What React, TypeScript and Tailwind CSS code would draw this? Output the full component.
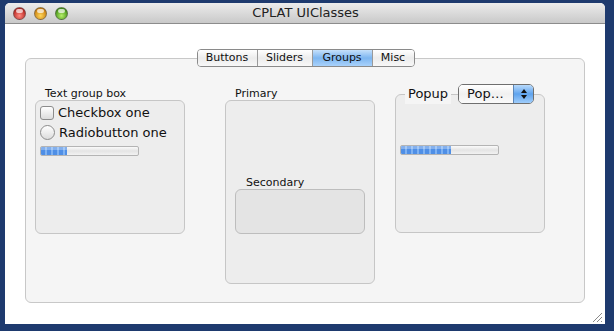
import React from "react";

const font = { fontFamily: '"DejaVu Sans", "Lucida Grande", sans-serif' };

function Light({ from, to }: { from: string; to: string }) {
  return (
    <div
      className="w-[13px] h-[13px] rounded-full border border-[#5a5a5a]/60 flex items-start justify-center"
      style={{ background: `radial-gradient(circle at 50% 70%, ${to} 0%, ${from} 75%)` }}
    >
      <div className="mt-[1px] w-[7px] h-[4px] rounded-full bg-white/70" />
    </div>
  );
}

function Progress({ fill }: { fill: number }) {
  return (
    <div className="w-[99px] h-[10px] rounded-[2px] border border-[#b4b4b4] bg-gradient-to-b from-[#fafafa] via-[#e4e4e4] to-[#f2f2f2] overflow-hidden flex">
      <div
        className="h-full bg-[repeating-linear-gradient(90deg,#4f8fe6_0px,#4f8fe6_4px,#7fb2f2_4px,#7fb2f2_6px)]"
        style={{ width: fill }}
      >
        <div className="h-[3px] bg-white/30" />
      </div>
    </div>
  );
}

function Box({ className = "", children }: { className?: string; children?: React.ReactNode }) {
  return (
    <div className={"w-[150px] rounded-[6px] border border-[#c6c6c6] bg-[#ededed] " + className}>
      {children}
    </div>
  );
}

const tabs = ["Buttons", "Sliders", "Groups", "Misc"];
const tabW = ["w-[59px]", "w-[55px]", "w-[60px]", "w-[42px]"];

export default function App() {
  return (
    <div className="w-[614px] h-[331px] bg-[#1e3a6e] pt-[3px] pl-[5px]" style={font}>
      <div className="w-[600px] h-[321px] flex flex-col bg-white rounded-t-[5px] overflow-hidden">
        {/* Title bar */}
        <div className="h-[21px] flex items-center bg-gradient-to-b from-[#ececec] to-[#c9c9c9] border-b border-[#8c8c8c] pl-[8px]">
          <div className="flex gap-[8px]">
            <Light from="#b3201c" to="#ff8a80" />
            <Light from="#c77b0a" to="#ffd75a" />
            <Light from="#3f8e12" to="#b6f06a" />
          </div>
          <div className="flex-1 text-center text-[13px] text-[#222] pr-[62px]">CPLAT UIClasses</div>
        </div>

        {/* Content */}
        <div className="flex-1 flex flex-col px-[20px] pt-[25px] relative">
          <div className="flex justify-center relative z-10 pl-[1px]">
            <div className="flex h-[18px] rounded-[4px] border border-[#8a8a8a] overflow-hidden text-[11px] text-[#111]">
              {tabs.map((t, i) => (
                <div
                  key={t}
                  className={
                    tabW[i] +
                    " flex items-center justify-center " +
                    (i > 0 ? "border-l border-[#9a9a9a] " : "") +
                    (t === "Groups"
                      ? "bg-gradient-to-b from-[#c6e1fb] via-[#7db6f0] to-[#a9d2fb]"
                      : "bg-gradient-to-b from-[#ffffff] via-[#ececec] to-[#f8f8f8]")
                  }
                >
                  {t}
                </div>
              ))}
            </div>
          </div>

          <div className="-mt-[9px] w-[560px] h-[245px] rounded-[6px] border border-[#c8c8c8] bg-[#f5f5f5] flex items-start pl-[9px] pt-[28px]">
            {/* Text group box */}
            <div className="flex flex-col">
              <div className="text-[11px] text-[#111] pl-[10px] h-[13px] leading-[13px]">Text group box</div>
              <Box className="h-[134px] pl-[4px] pt-[3px] text-[13px] text-[#111]">
                <div className="flex items-center gap-[4px] h-[17px]">
                  <div className="w-[14px] h-[14px] rounded-[3px] border border-[#8c8c8c] bg-gradient-to-b from-white to-[#dcdcdc]" />
                  <span>Checkbox one</span>
                </div>
                <div className="flex items-center gap-[4px] h-[17px] mt-[3px]">
                  <div className="w-[15px] h-[15px] rounded-full border border-[#8c8c8c] bg-gradient-to-b from-white to-[#dcdcdc]" />
                  <span>Radiobutton one</span>
                </div>
                <div className="mt-[5px]">
                  <Progress fill={26} />
                </div>
              </Box>
            </div>

            {/* Primary */}
            <div className="flex flex-col ml-[40px]">
              <div className="text-[11px] text-[#111] pl-[10px] h-[13px] leading-[13px]">Primary</div>
              <Box className="h-[184px] flex flex-col pl-[9px] pt-[75px]">
                <div className="text-[11px] text-[#111] pl-[11px] h-[13px] leading-[13px]">Secondary</div>
                <div className="w-[130px] h-[45px] rounded-[6px] border border-[#bdbdbd] bg-[#e4e4e4]" />
              </Box>
            </div>

            {/* Popup */}
            <div className="flex flex-col ml-[20px] -mt-[3px]">
              <div className="flex items-center h-[20px] -mb-[10px] relative z-10 pl-[10px]">
                <span className="text-[13px] text-[#111] bg-[#f5f5f5] px-[3px]">Popup</span>
                <div className="ml-[7px] w-[76px] h-[20px] rounded-[5px] border border-[#6f6f6f] flex overflow-hidden text-[13px] text-[#111]">
                  <div className="flex-1 flex items-center pl-[8px] bg-gradient-to-b from-white via-[#f0f0f0] to-[#fafafa]">
                    Pop…
                  </div>
                  <div className="w-[20px] flex flex-col items-center justify-center gap-[2px] bg-gradient-to-b from-[#b8dafb] via-[#5ea3ee] to-[#9fcdfb] border-l border-[#5b86b8]">
                    <div className="w-0 h-0 border-l-[3px] border-r-[3px] border-b-[4px] border-l-transparent border-r-transparent border-b-[#111]" />
                    <div className="w-0 h-0 border-l-[3px] border-r-[3px] border-t-[4px] border-l-transparent border-r-transparent border-t-[#111]" />
                  </div>
                </div>
              </div>
              <Box className="h-[139px] pl-[4px] pt-[50px]">
                <Progress fill={50} />
              </Box>
            </div>
          </div>

          {/* Resize grip */}
          <div className="absolute right-[2px] bottom-[1px]">
            <svg width="12" height="12" viewBox="0 0 12 12">
              <path d="M11 2 L2 11 M11 6 L6 11 M11 10 L10 11" stroke="#8a8a8a" strokeWidth="1" />
              <path d="M12 3 L3 12 M12 7 L7 12" stroke="#ffffff" strokeWidth="1" />
            </svg>
          </div>
        </div>
      </div>
    </div>
  );
}
